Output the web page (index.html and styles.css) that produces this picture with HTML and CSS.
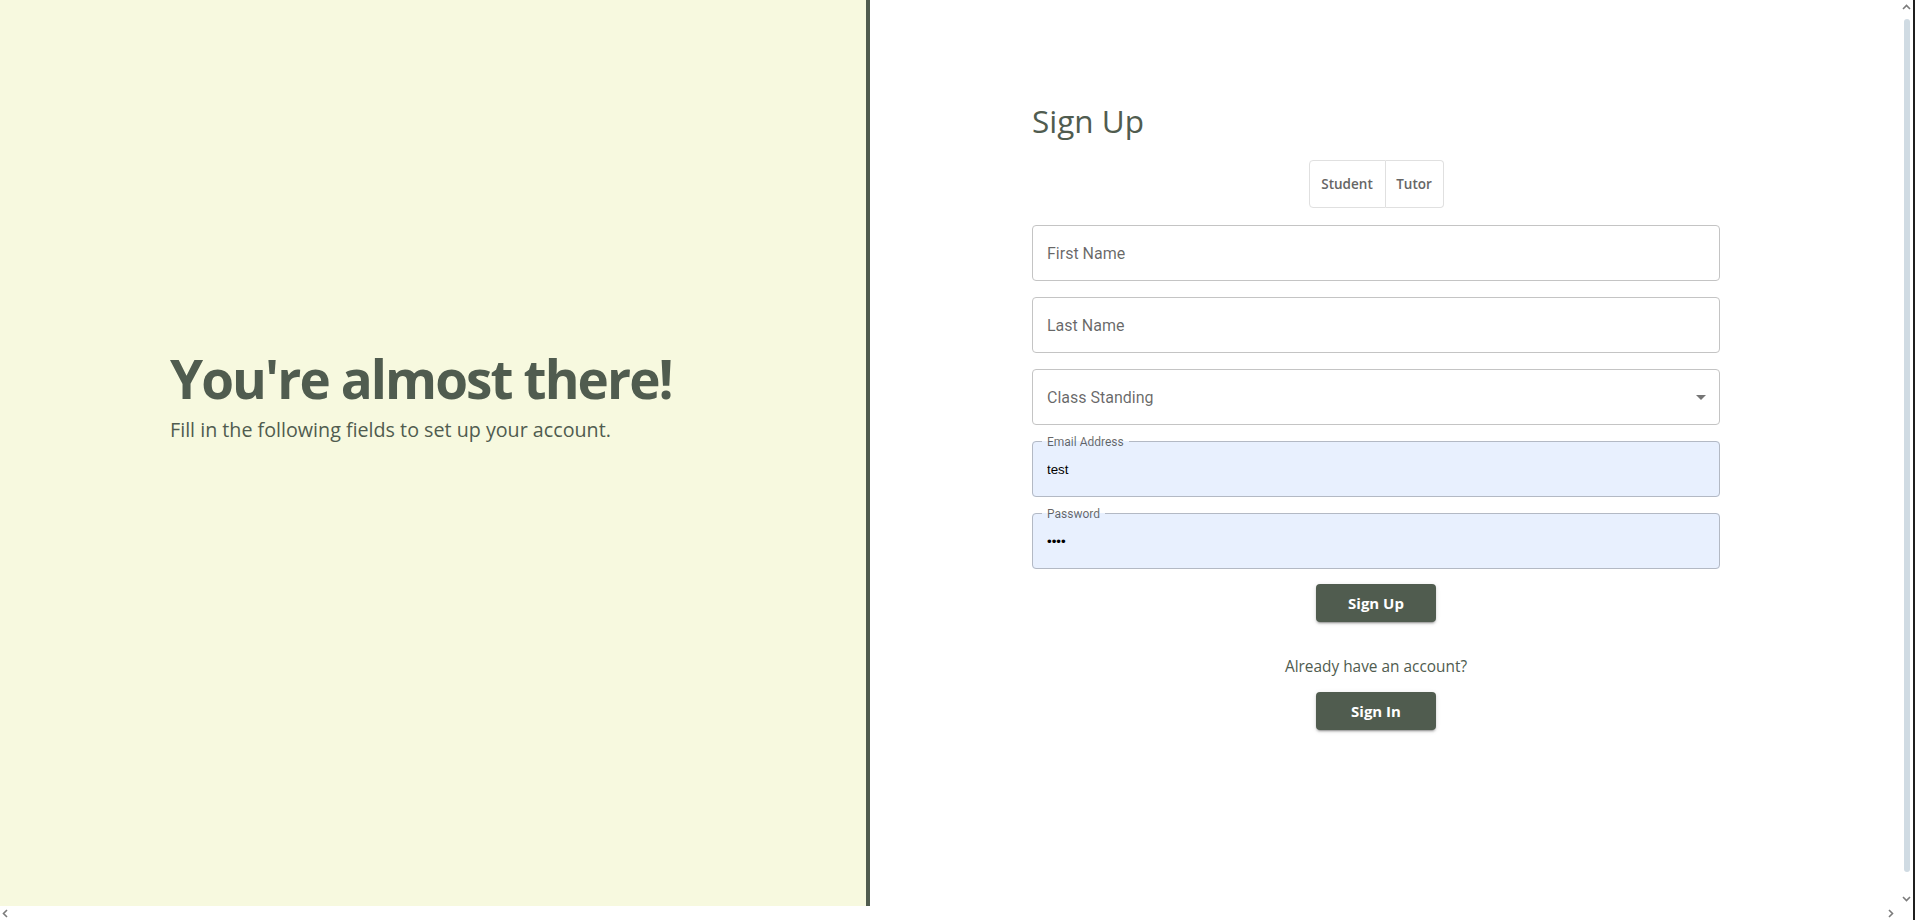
FILE: index.html
```html
<!DOCTYPE html>
<html lang="en">
<head>
<meta charset="utf-8">
<title>Sign Up</title>
<link rel="stylesheet" href="styles.css">
</head>
<body>
<div class="window">
  <div class="main">
    <div class="viewport">
      <section class="intro">
        <h1 class="intro-title">You're almost there!</h1>
        <p class="intro-text">Fill in the following fields to set up your account.</p>
      </section>
      <section class="signup">
        <div class="form">
          <h2 class="form-title">Sign Up</h2>
          <div class="toggle-group">
            <button class="toggle">Student</button>
            <button class="toggle">Tutor</button>
          </div>
          <div class="field"><span class="placeholder">First Name</span></div>
          <div class="field"><span class="placeholder">Last Name</span></div>
          <div class="field select"><span class="placeholder">Class Standing</span>
            <svg class="select-arrow" viewBox="0 0 24 24" width="24" height="24"><path d="M7 10l5 5 5-5z"/></svg>
          </div>
          <fieldset class="filled">
            <legend>Email Address</legend>
            <input class="filled-input" type="text" value="test">
          </fieldset>
          <fieldset class="filled">
            <legend>Password</legend>
            <input class="filled-input" type="password" value="test">
          </fieldset>
          <button class="btn btn-signup">Sign Up</button>
          <p class="already">Already have an account?</p>
          <button class="btn btn-signin">Sign In</button>
        </div>
      </section>
    </div>
    <div class="vscroll">
      <svg class="arrow-up" width="9" height="6" viewBox="0 0 9 6"><path d="M1 5l3.5-3.5L8 5" fill="none" stroke="#7b7b7b" stroke-width="1.6"/></svg>
      <div class="vthumb"></div>
      <svg class="arrow-down" width="9" height="6" viewBox="0 0 9 6"><path d="M1 1l3.5 3.5L8 1" fill="none" stroke="#7b7b7b" stroke-width="1.6"/></svg>
    </div>
  </div>
  <div class="hscroll">
    <svg width="6" height="9" viewBox="0 0 6 9"><path d="M5 1L1.5 4.5 5 8" fill="none" stroke="#7b7b7b" stroke-width="1.6"/></svg>
    <svg width="6" height="9" viewBox="0 0 6 9"><path d="M1 1l3.5 3.5L1 8" fill="none" stroke="#7b7b7b" stroke-width="1.6"/></svg>
  </div>
</div>
</body>
</html>
```

FILE: styles.css
```css
* { box-sizing: border-box; }
html, body { margin: 0; padding: 0; }
body {
  width: 1915px;
  height: 920px;
  overflow: hidden;
  background: #ffffff;
  font-family: "Open Sans", "Noto Sans", sans-serif;
}
.window {
  width: 1915px;
  height: 920px;
  display: flex;
  flex-direction: column;
  border-right: 2px solid #1f1f1f;
}
.main {
  display: flex;
  height: 906px;
}
.viewport {
  flex: 1;
  display: flex;
  min-width: 0;
}
.intro {
  width: 870px;
  flex: none;
  background: #f7f9df;
  border-right: 4px solid #505c4f;
  padding: 347px 0 0 170px;
  color: #505c4f;
}
.intro-title {
  margin: 0;
  font-size: 53px;
  line-height: 1.22;
  font-weight: 700;
  letter-spacing: -1.9px;
}
.intro-text {
  margin: 4px 0 0;
  font-size: 19.7px;
  line-height: 1.4;
}
.signup {
  flex: 1;
  padding: 102px 0 0 162px;
}
.form {
  width: 688px;
  display: flex;
  flex-direction: column;
  align-items: center;
}
.form-title {
  align-self: flex-start;
  margin: 0;
  font-size: 31.5px;
  line-height: 1.2;
  font-weight: 400;
  color: #505c4f;
}
.toggle-group {
  display: flex;
  margin-top: 20px;
  height: 48px;
}
.toggle {
  font-family: "Open Sans", sans-serif;
  font-weight: 600;
  font-size: 13.5px;
  color: #666666;
  background: #fff;
  border: 1px solid #e0e0e0;
  padding: 0 8px;
  cursor: pointer;
}
.toggle:first-child { border-radius: 4px 0 0 4px; width: 77px; }
.toggle:last-child { border-radius: 0 4px 4px 0; border-left: 0; width: 58px; }
.field {
  align-self: stretch;
  height: 56px;
  border: 1px solid #c4c4c4;
  border-radius: 4px;
  display: flex;
  align-items: center;
  padding: 0 14px;
  margin-top: 16px;
  font-family: Roboto, "Liberation Sans", sans-serif;
  font-size: 16px;
  color: rgba(0,0,0,0.6);
}
.toggle-group + .field { margin-top: 17.5px; }
.select { justify-content: space-between; padding-right: 6px; }
.select-arrow { fill: rgba(0,0,0,0.54); }
.filled {
  align-self: stretch;
  margin: 10.5px 0 0;
  padding: 0 9px;
  min-width: 0;
  border: 1px solid #b3b9c4;
  border-radius: 4px;
  background: #e8f0fe;
}
.filled legend {
  padding: 0 5px;
  font-family: Roboto, "Liberation Sans", sans-serif;
  font-size: 12px;
  line-height: 12px;
  color: rgba(0,0,0,0.6);
}
.filled-input {
  display: block;
  width: 100%;
  height: 48.5px;
  border: 0;
  outline: 0;
  background: transparent;
  padding: 0 5px 5px;
  font-family: "Liberation Sans", Arial, sans-serif;
  font-size: 13.33px;
  color: #000;
}
.btn {
  width: 120px;
  height: 38px;
  border: 0;
  border-radius: 4px;
  background: #505c4f;
  color: #fff;
  font-family: "Open Sans", sans-serif;
  font-weight: 700;
  font-size: 15px;
  cursor: pointer;
  box-shadow: 0 3px 1px -2px rgba(0,0,0,0.2), 0 2px 2px 0 rgba(0,0,0,0.14), 0 1px 5px 0 rgba(0,0,0,0.12);
}
.btn-signup { margin-top: 15px; }
.already {
  margin: 33px 0 0;
  font-size: 15.4px;
  line-height: 24px;
  color: #505c4f;
}
.btn-signin { margin-top: 13px; }
.vscroll {
  width: 13px;
  display: flex;
  flex-direction: column;
  align-items: center;
  padding-top: 4px;
}
.arrow-up, .arrow-down { display: block; flex: none; }
.vthumb {
  width: 6px;
  height: 853px;
  margin-top: 9px;
  border-radius: 3px;
  background: #d0dbe3;
}
.arrow-down { margin-top: 24px; }
.hscroll {
  height: 14px;
  display: flex;
  align-items: center;
  justify-content: space-between;
  padding: 0 19px 0 2px;
}
.hscroll svg { display: block; }
```
